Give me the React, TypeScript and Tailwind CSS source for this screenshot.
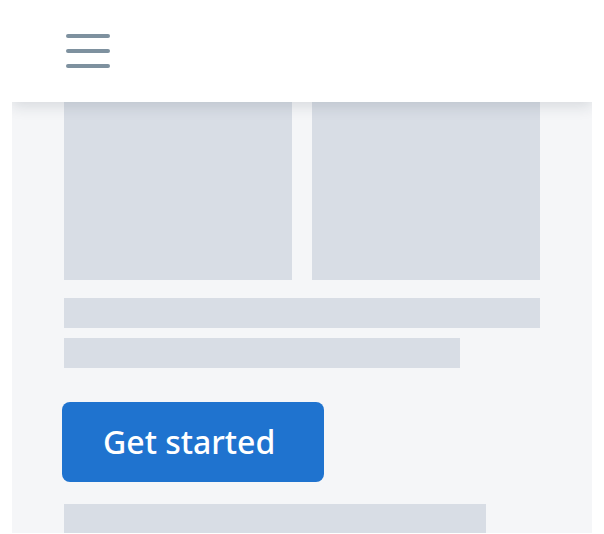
export default function App() {
  return (
    <div className="h-[534px] w-[604px] bg-white" style={{ fontFamily: '"Open Sans", "Noto Sans", sans-serif' }}>
      <div className="mx-3 h-[533px] w-[580px] overflow-hidden bg-[#f5f6f8]">
        {/* Header */}
        <header className="relative z-10 flex h-[102px] items-center bg-white pl-[54px] shadow-[0_4px_14px_rgba(30,40,60,0.14)]">
          <button className="flex flex-col gap-[11px]" aria-label="Menu">
            <span className="block h-[4px] w-[44px] rounded-full bg-[#7e919f]" />
            <span className="block h-[4px] w-[44px] rounded-full bg-[#7e919f]" />
            <span className="block h-[4px] w-[44px] rounded-full bg-[#7e919f]" />
          </button>
        </header>

        {/* Content */}
        <main className="flex flex-col px-[52px]">
          <div className="flex gap-5">
            <div className="h-[178px] w-[228px] bg-[#d8dde5]" />
            <div className="h-[178px] w-[228px] bg-[#d8dde5]" />
          </div>
          <div className="mt-[18px] h-[30px] w-[476px] bg-[#d8dde5]" />
          <div className="mt-[10px] h-[30px] w-[396px] bg-[#d8dde5]" />
          <button className="-ml-[2px] mt-[34px] flex h-[80px] w-[262px] items-center rounded-lg bg-[#1f73cf] pl-[41px] font-['Noto_Sans',sans-serif] text-[32px] font-medium text-white">
            Get started
          </button>
          <div className="mt-[22px] h-[30px] w-[422px] bg-[#d8dde5]" />
        </main>
      </div>
    </div>
  );
}
